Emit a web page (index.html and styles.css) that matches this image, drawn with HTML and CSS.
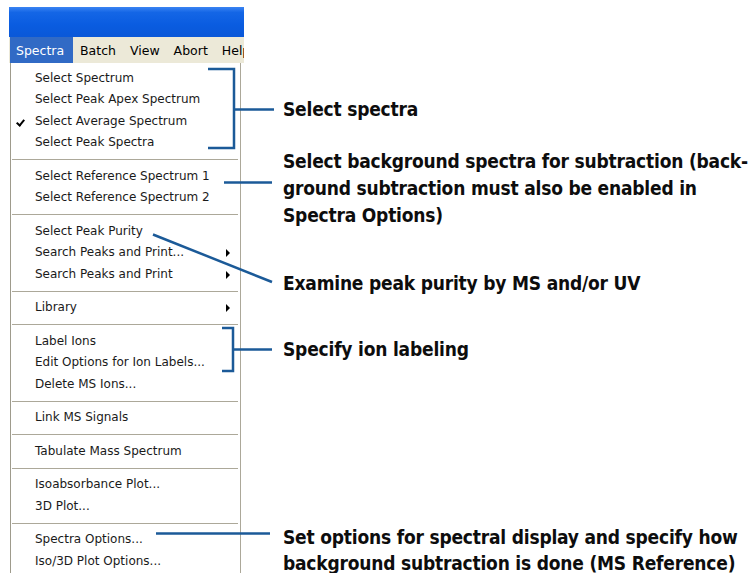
FILE: index.html
```html
<!DOCTYPE html>
<html>
<head>
<meta charset="utf-8">
<link rel="stylesheet" href="styles.css">
</head>
<body>
<div class="page">
  <div class="window">
    <div class="titlebar"></div>
    <div class="menubar">
      <span class="mb-item active">Spectra</span>
      <span class="mb-item">Batch</span>
      <span class="mb-item">View</span>
      <span class="mb-item">Abort</span>
      <span class="mb-item">Help</span>
    </div>
    <div class="dropdown">
      <div class="item">Select Spectrum</div>
      <div class="item">Select Peak Apex Spectrum</div>
      <div class="item checked">Select Average Spectrum</div>
      <div class="item">Select Peak Spectra</div>
      <div class="sep"></div>
      <div class="item">Select Reference Spectrum 1</div>
      <div class="item">Select Reference Spectrum 2</div>
      <div class="sep"></div>
      <div class="item">Select Peak Purity</div>
      <div class="item sub">Search Peaks and Print...</div>
      <div class="item sub">Search Peaks and Print</div>
      <div class="sep"></div>
      <div class="item sub">Library</div>
      <div class="sep"></div>
      <div class="item">Label Ions</div>
      <div class="item">Edit Options for Ion Labels...</div>
      <div class="item">Delete MS Ions...</div>
      <div class="sep"></div>
      <div class="item">Link MS Signals</div>
      <div class="sep"></div>
      <div class="item">Tabulate Mass Spectrum</div>
      <div class="sep"></div>
      <div class="item">Isoabsorbance Plot...</div>
      <div class="item">3D Plot...</div>
      <div class="sep"></div>
      <div class="item">Spectra Options...</div>
      <div class="item">Iso/3D Plot Options...</div>
    </div>
  </div>
  <div class="notes">
    <p class="note n1">Select spectra</p>
    <p class="note n2">Select background spectra for subtraction (back-<br>ground subtraction must also be enabled in<br>Spectra Options)</p>
    <p class="note n3">Examine peak purity by MS and/or UV</p>
    <p class="note n4">Specify ion labeling</p>
    <p class="note n5">Set options for spectral display and specify how<br>background subtraction is done (MS Reference)</p>
  </div>
  <svg class="connectors" width="756" height="573" viewBox="0 0 756 573">
    <g fill="none" stroke="#1b5a98" stroke-width="2.5">
      <polyline points="208,69 234,69 234,148 208,148"/>
      <line x1="234" y1="109.5" x2="274" y2="109.5"/>
      <line x1="224" y1="182.5" x2="272" y2="182.5"/>
      <line x1="153" y1="234.5" x2="272" y2="282"/>
      <polyline points="222,328 233,328 233,371 222,371"/>
      <line x1="233" y1="349.5" x2="272" y2="349.5"/>
      <line x1="156" y1="533.5" x2="270" y2="533.5"/>
    </g>
  </svg>
</div>
</body>
</html>
```
FILE: styles.css
```css
html, body {
  margin: 0;
  padding: 0;
  background: #ffffff;
}

.page {
  position: relative;
  width: 756px;
  height: 573px;
  overflow: hidden;
  display: flex;
  align-items: flex-start;
}

.window {
  margin-left: 9px;
  margin-top: 7px;
  width: 235px;
  flex: none;
}

.titlebar {
  height: 30px;
  background: linear-gradient(#3b84f2 0%, #1466e6 18%, #0a5ce0 60%, #0a58d8 100%);
}

.menubar {
  height: 26px;
  background: #ece9d8;
  display: flex;
  align-items: stretch;
  padding-left: 1px;
  overflow: hidden;
  white-space: nowrap;
  font-family: "DejaVu Sans", Verdana, sans-serif;
  font-size: 12.5px;
  color: #000;
}

.mb-item {
  display: flex;
  align-items: center;
  padding: 0 7px;
  flex: none;
}

.mb-item.active {
  background: #316ac5;
  color: #ffffff;
  padding: 0 8px 0 6px;
  width: 49px;
}

.dropdown {
  width: 229px;
  margin-left: 1px;
  border-left: 1px solid #9e9b8c;
  border-right: 1px solid #aca899;
  background: #ffffff;
  padding-top: 4.5px;
  height: 520px;
  font-family: "DejaVu Sans", Verdana, sans-serif;
  font-size: 12px;
  color: #1a1a1a;
}

.item {
  height: 21.5px;
  line-height: 21.5px;
  padding-left: 24px;
  position: relative;
  white-space: nowrap;
}

.item.checked::before {
  content: "";
  position: absolute;
  left: 7px;
  top: 7px;
  width: 3px;
  height: 6px;
  border-right: 2px solid #000;
  border-bottom: 2px solid #000;
  transform: rotate(40deg);
}

.item.sub::after {
  content: "";
  position: absolute;
  right: 10px;
  top: 7px;
  border-top: 4px solid transparent;
  border-bottom: 4px solid transparent;
  border-left: 4px solid #000;
}

.sep {
  height: 12px;
  display: flex;
  align-items: center;
  padding: 0 2px 0 1px;
}

.sep::before {
  content: "";
  flex: 1;
  border-top: 1px solid #aca899;
}

.notes {
  margin-left: 39px;
  flex: 1;
  font-family: "DejaVu Sans Condensed", "DejaVu Sans", sans-serif;
  font-stretch: condensed;
  font-weight: bold;
  font-size: 19px;
  letter-spacing: -0.2px;
  line-height: 27px;
  color: #0d0d0d;
}

.note {
  margin: 0;
  white-space: nowrap;
}

.n1 { margin-top: 96px; }
.n2 { margin-top: 25px; }
.n3 { margin-top: 41px; }
.n4 { margin-top: 39px; }
.n5 { margin-top: 161px; line-height: 26px; }

.connectors {
  position: absolute;
  left: 0;
  top: 0;
  pointer-events: none;
}
```
